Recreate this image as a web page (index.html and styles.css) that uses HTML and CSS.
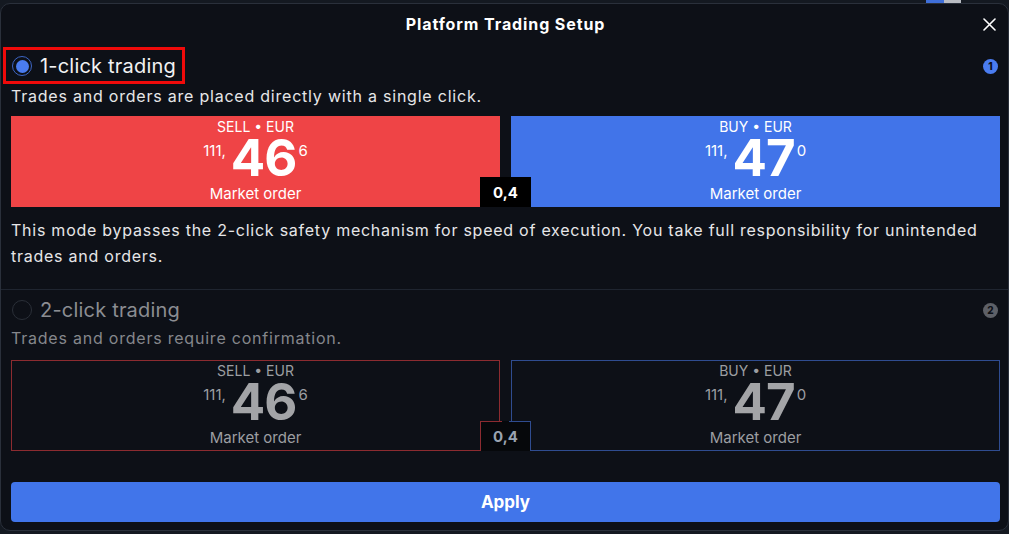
FILE: index.html
```html
<!DOCTYPE html>
<html lang="en">
<head>
<meta charset="utf-8">
<title>Platform Trading Setup</title>
<link rel="stylesheet" href="styles.css">
</head>
<body>
<div class="backdrop-strip">
  <span class="bg-text">Show non-tradable instruments in account</span>
  <span class="bg-chip bg-chip-blue"></span><span class="bg-chip bg-chip-gray"></span>
</div>
<div class="dialog">
  <header class="dialog-header">
    <h1 class="dialog-title">Platform Trading Setup</h1>
    <button class="close-btn" aria-label="Close">
      <svg width="13" height="13" viewBox="0 0 13 13"><path d="M1 1L12 12M12 1L1 12" stroke="#fff" stroke-width="1.6" stroke-linecap="round"/></svg>
    </button>
  </header>

  <section class="mode mode-active">
    <div class="mode-row">
      <span class="radio radio-on"><span class="radio-dot"></span></span>
      <span class="mode-title">1-click trading</span>
      <span class="badge badge-blue">1</span>
      <span class="highlight"></span>
    </div>
    <p class="mode-desc">Trades and orders are placed directly with a single click.</p>
    <div class="ticket">
      <div class="side side-sell">
        <div class="side-label">SELL • EUR</div>
        <div class="price"><span class="price-small">111,</span><span class="price-big">46</span><span class="price-sup">6</span></div>
        <div class="side-type">Market order</div>
      </div>
      <div class="side side-buy">
        <div class="side-label">BUY • EUR</div>
        <div class="price"><span class="price-small">111,</span><span class="price-big">47</span><span class="price-sup">0</span></div>
        <div class="side-type">Market order</div>
      </div>
      <div class="spread">0,4</div>
    </div>
    <p class="mode-note">This mode bypasses the 2-click safety mechanism for speed of execution. You take full responsibility for unintended trades and orders.</p>
  </section>

  <section class="mode mode-inactive">
    <div class="mode-row">
      <span class="radio radio-off"></span>
      <span class="mode-title">2-click trading</span>
      <span class="badge badge-gray">2</span>
    </div>
    <p class="mode-desc">Trades and orders require confirmation.</p>
    <div class="ticket ticket-outline">
      <div class="side side-sell">
        <div class="side-label">SELL • EUR</div>
        <div class="price"><span class="price-small">111,</span><span class="price-big">46</span><span class="price-sup">6</span></div>
        <div class="side-type">Market order</div>
      </div>
      <div class="side side-buy">
        <div class="side-label">BUY • EUR</div>
        <div class="price"><span class="price-small">111,</span><span class="price-big">47</span><span class="price-sup">0</span></div>
        <div class="side-type">Market order</div>
      </div>
      <div class="spread">0,4</div>
    </div>
  </section>

  <button class="apply-btn">Apply</button>
</div>
</body>
</html>
```

FILE: styles.css
```css
* { box-sizing: border-box; }
html, body { margin: 0; padding: 0; }
body {
  width: 1009px;
  height: 534px;
  overflow: hidden;
  background: #141921;
  font-family: Inter, "Noto Sans", sans-serif;
  color: #e8e8ea;
}

.backdrop-strip {
  height: 3px;
  overflow: hidden;
  display: flex;
  align-items: flex-start;
}
.bg-text {
  margin-left: 270px;
  margin-top: -17px;
  font-size: 20px;
  line-height: 20px;
  color: #5d636d;
  white-space: nowrap;
}
.bg-chip { display: block; height: 3px; width: 18px; flex-shrink: 0; }
.bg-chip-blue { margin-left: 255px; background: #3f6fd9; }
.bg-chip-gray { width: 17px; background: #b9bcc2; }

.dialog {
  width: 1009px;
  border: 1px solid #2a303b;
  border-radius: 10px;
  background: #0d1017;
  padding: 0 8px 8px 10px;
  display: flex;
  flex-direction: column;
}
.dialog > * { flex-shrink: 0; }

.dialog-header {
  height: 40px;
  display: flex;
  align-items: center;
  justify-content: center;
  position: relative;
}
.dialog-title {
  margin: 0;
  font-size: 16px;
  font-weight: 700;
  color: #ffffff;
  letter-spacing: 0.9px;
}
.close-btn {
  position: absolute;
  right: 4px;
  top: 14px;
  background: none;
  border: 0;
  padding: 0;
  width: 13px;
  height: 13px;
  display: flex;
}

.mode { display: flex; flex-direction: column; }
.mode-active {
  padding-top: 12px;
  padding-bottom: 20px;
  border-bottom: 1px solid #1f2530;
  margin-left: -10px;
  margin-right: -8px;
  padding-left: 10px;
  padding-right: 8px;
}
.mode-inactive { padding-top: 10px; }

.mode-row {
  height: 20px;
  display: flex;
  align-items: center;
  position: relative;
}
.radio {
  width: 20px;
  height: 20px;
  border-radius: 50%;
  margin-left: 1px;
  display: flex;
  align-items: center;
  justify-content: center;
  flex-shrink: 0;
}
.radio-on { border: 1.5px solid #3d65c4; }
.radio-dot { width: 13px; height: 13px; border-radius: 50%; background: #4a7cf0; }
.radio-off { border: 1.5px solid #2a2f38; }

.mode-title {
  margin-left: 8px;
  font-size: 20px;
  line-height: 20px;
  letter-spacing: 0.2px;
  color: #f2f2f3;
}
.mode-inactive .mode-title { color: #8b8d92; }

.badge {
  margin-left: auto;
  margin-right: 2px;
  width: 15px;
  height: 15px;
  border-radius: 50%;
  font-size: 10px;
  font-weight: 800;
  line-height: 15px;
  text-align: center;
  color: #0d1017;
}
.badge-blue { background: #4a7cf0; }
.badge-gray { background: #5d6067; }

.highlight {
  position: absolute;
  left: -8px;
  top: -9px;
  width: 182px;
  height: 37px;
  border: 3px solid #f00a0a;
}

.mode-desc {
  margin: 10px 0 0;
  font-size: 16px;
  line-height: 20px;
  letter-spacing: 0.78px;
  color: #e6e6e8;
}
.mode-inactive .mode-desc { margin-top: 8px; color: #85878c; }

.mode-note {
  margin: 10px 0 0;
  font-size: 16px;
  line-height: 26px;
  letter-spacing: 0.75px;
  color: #e6e6e8;
}

.ticket {
  margin-top: 10px;
  height: 91px;
  display: flex;
  gap: 11px;
  position: relative;
}
.mode-inactive .ticket { margin-top: 12px; }

.side {
  flex: 1;
  display: flex;
  flex-direction: column;
  align-items: center;
  color: #ffffff;
}
.side-sell { background: #ef4446; }
.side-buy { background: #4174e9; }

.side-label {
  margin-top: 3px;
  font-size: 14px;
  line-height: 16px;
}
.price {
  display: flex;
  align-items: flex-start;
  height: 45px;
  margin-top: -1px;
}
.price-small {
  font-size: 15px;
  line-height: 15px;
  margin-top: 9px;
  margin-right: 5px;
}
.price-big {
  font-size: 51px;
  font-weight: 700;
  line-height: 47px;
  letter-spacing: -1px;
}
.price-sup {
  font-size: 15px;
  line-height: 15px;
  margin-top: 9px;
  margin-left: 2px;
}
.side-type {
  margin-top: 6px;
  font-size: 15px;
  line-height: 18px;
}

.spread {
  position: absolute;
  left: 50%;
  bottom: 0;
  width: 51px;
  height: 30px;
  margin-left: -25.5px;
  background: #000000;
  color: #ffffff;
  font-size: 15px;
  font-weight: 700;
  display: flex;
  align-items: center;
  justify-content: center;
}

.ticket-outline .side { background: #0d1017; color: #9c9ea2; }
.ticket-outline .side-sell { border: 1px solid #8c2b30; }
.ticket-outline .side-buy { border: 1px solid #2f4c90; }
.ticket-outline .side-label { margin-top: 2px; }
.ticket-outline .price-big { color: #a3a4a7; }
.ticket-outline .spread {
  background: #06080b;
  color: #9aa3b0;
  border-left: 1px solid #8c2b30;
  border-right: 1px solid #2f4c90;
}
.ticket-outline .spread::before,
.ticket-outline .spread::after {
  content: "";
  position: absolute;
  top: 0;
  width: 21px;
  height: 1px;
}
.ticket-outline .spread::before { left: 0; background: #8c2b30; }
.ticket-outline .spread::after { right: 0; background: #2f4c90; }

.apply-btn {
  margin-top: 31px;
  height: 40px;
  width: 989px;
  border: 0;
  border-radius: 4px;
  background: #4175ea;
  color: #ffffff;
  font-family: Inter, "Noto Sans", sans-serif;
  font-size: 17px;
  font-weight: 700;
}
```
